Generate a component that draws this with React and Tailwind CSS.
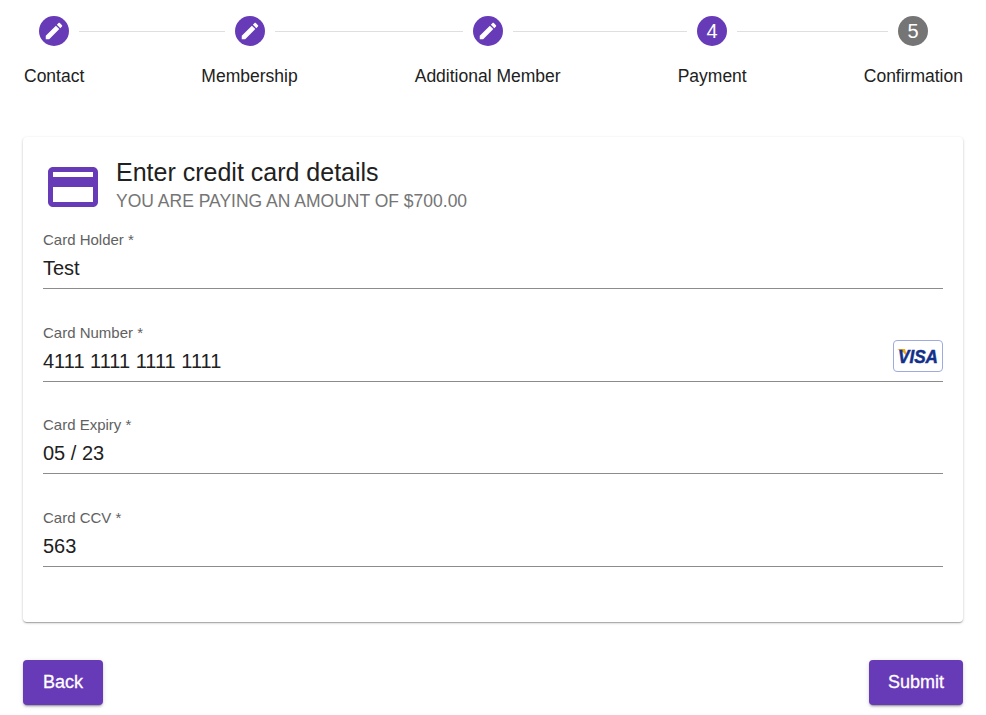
function Pencil() {
  return (
    <svg viewBox="0 0 24 24" className="w-[22px] h-[22px]" fill="#fff">
      <path d="M3 17.25V21h3.75L17.81 9.94l-3.75-3.75L3 17.25zM20.71 7.04c.39-.39.39-1.02 0-1.41l-2.34-2.34c-.39-.39-1.02-.39-1.41 0l-1.83 1.83 3.75 3.75 1.83-1.83z" />
    </svg>
  );
}
function Circle({ children, grey }) {
  return (
    <div className={`w-[30px] h-[30px] rounded-full flex items-center justify-center shrink-0 text-white text-[20px] ${grey ? "bg-[#757575]" : "bg-[#673ab7]"}`}>
      {children}
    </div>
  );
}
function Line({ className }) {
  return <div className={`h-px bg-[#dfdfdf] mx-[10px] ${className}`} />;
}
function Field({ label, value, children, className }) {
  return (
    <div className={`relative ${className}`}>
      <div className="text-[15px] leading-[15px] text-[#616161]">{label}</div>
      <div className="flex items-center h-[42px] border-b border-[#8c8c8c] text-[20px] text-[#212121]">
        <span className="flex-1">{value}</span>
        {children}
      </div>
    </div>
  );
}
function Visa() {
  return (
    <svg viewBox="0 0 50 32" className="w-[50px] h-[32px] absolute right-0 top-[15px]">
      <rect x="0.5" y="0.5" width="49" height="31" rx="3.5" fill="#fff" stroke="#9fabdc" />
      <path d="M4 9 H12 L14.5 18 C12.5 13.5 9 10.5 4 9 Z" fill="#f2a51f" />
      <text x="25" y="23" textAnchor="middle" fontFamily="'Liberation Sans', sans-serif" fontSize="19" fontWeight="700" fontStyle="italic" fill="#12308a" stroke="#12308a" strokeWidth="0.5" textLength="40" lengthAdjust="spacingAndGlyphs">VISA</text>
    </svg>
  );
}
const btn = "h-[45px] rounded-[4px] bg-[#673ab7] text-white text-[18px] font-medium [-webkit-text-stroke:0.3px_white] shadow-[0_3px_1px_-2px_rgba(0,0,0,0.2),0_2px_2px_0_rgba(0,0,0,0.14),0_1px_5px_0_rgba(0,0,0,0.12)]";
export default function App() {
  return (
    <div className="font-['Liberation_Sans',Arial,sans-serif] bg-white min-h-[715px] px-[23px] pt-[16px] text-[#212121]">
      <div className="flex items-center pl-[16px]">
        <Circle><Pencil /></Circle>
        <Line className="w-[146px]" />
        <Circle><Pencil /></Circle>
        <Line className="w-[188px]" />
        <Circle><Pencil /></Circle>
        <Line className="w-[174px]" />
        <Circle>4</Circle>
        <Line className="w-[151px]" />
        <Circle grey>5</Circle>
      </div>
      <div className="flex justify-between mt-[17px] text-[17.5px] leading-[26px] text-[#212121] pl-px">
        <span>Contact</span>
        <span>Membership</span>
        <span>Additional Member</span>
        <span>Payment</span>
        <span>Confirmation</span>
      </div>
      <div className="mt-[48px] h-[485px] rounded-[4px] bg-white p-[20px] shadow-[0_1px_3px_0_rgba(0,0,0,0.2),0_1px_1px_0_rgba(0,0,0,0.14),0_2px_1px_-1px_rgba(0,0,0,0.12)]">
        <div className="flex h-[60px]">
          <svg viewBox="0 0 24 24" className="w-[60px] h-[60px] shrink-0" fill="#673ab7">
            <path d="M20 4H4c-1.11 0-1.99.89-1.99 2L2 18c0 1.11.89 2 2 2h16c1.11 0 2-.89 2-2V6c0-1.11-.89-2-2-2zm0 14H4v-6h16v6zm0-10H4V6h16v2z" />
          </svg>
          <div className="ml-[13px]">
            <div className="text-[25px] leading-[30px] text-[#212121]">Enter credit card details</div>
            <div className="text-[17.5px] leading-[28px] text-[#757575] uppercase">You are paying an amount of $700.00</div>
          </div>
        </div>
        <div className="mt-[15px]">
          <Field label="Card Holder *" value="Test" />
          <Field label="Card Number *" value="4111 1111 1111 1111" className="mt-[36px]"><Visa /></Field>
          <Field label="Card Expiry *" value="05 / 23" className="mt-[35px]" />
          <Field label="Card CCV *" value="563" className="mt-[36px]" />
        </div>
      </div>
      <div className="flex justify-between mt-[38px]">
        <button className={`w-[80px] ${btn}`}>Back</button>
        <button className={`w-[94px] ${btn}`}>Submit</button>
      </div>
    </div>
  );
}
